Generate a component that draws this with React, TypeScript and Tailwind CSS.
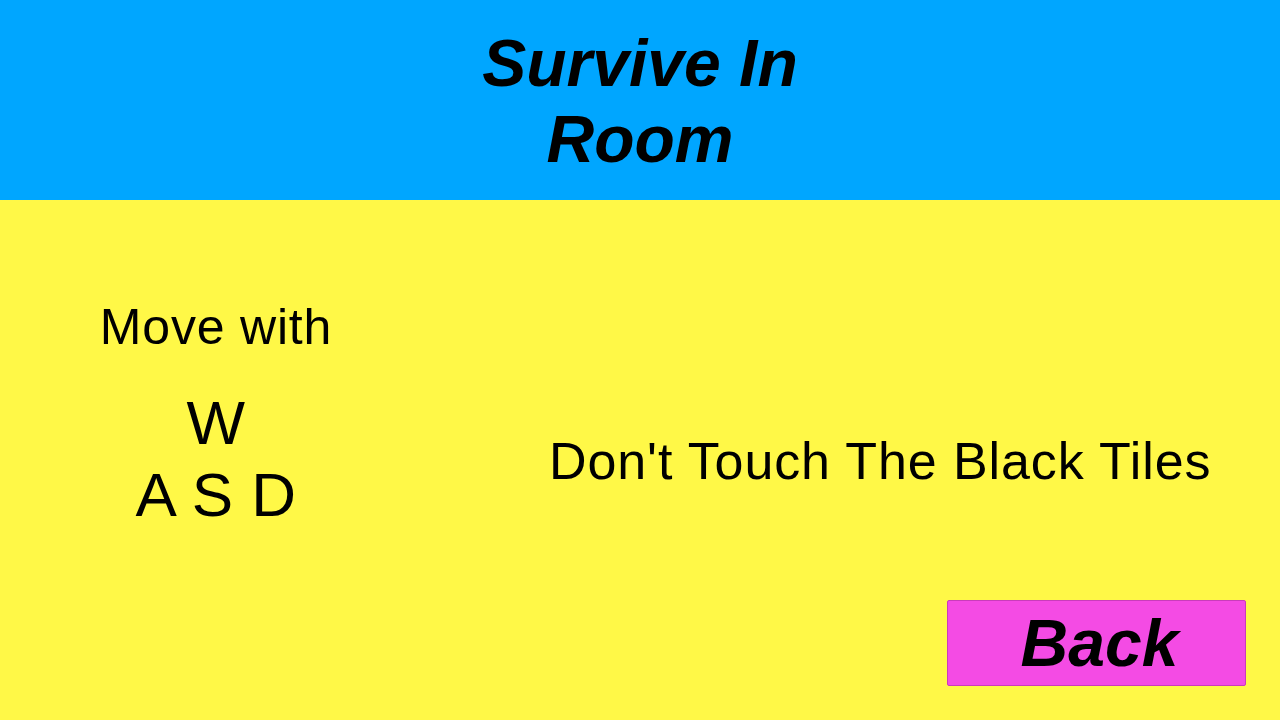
import React from 'react';

const font = { fontFamily: '"Liberation Sans", Arial, sans-serif' };

export default function App() {
  return (
    <div className="flex h-[720px] w-[1280px] flex-col overflow-hidden text-black" style={font}>
      <header className="flex h-[200px] shrink-0 items-center justify-center bg-[#00a6ff] pt-[2px]">
        <h1 className="w-[400px] text-center text-[66px] font-bold italic leading-[76px]">Survive In Room</h1>
      </header>

      <main className="flex flex-1 bg-[#fff847]">
        <section className="flex w-[432px] flex-col items-center pt-[99px]">
          <p className="text-[50px] leading-[57px] tracking-[0.8px]">Move with</p>
          <div className="mt-[31px] flex flex-col items-center text-[62px] leading-[72px] tracking-[0.5px]">
            <span>W</span>
            <span>A S D</span>
          </div>
        </section>

        <section className="flex flex-1 flex-col pt-[231px]">
          <p className="pl-[117px] text-[52px] leading-[60px] tracking-[0.9px]">Don't Touch The Black Tiles</p>
          <button className="mr-[34px] mt-[109px] flex h-[86px] w-[299px] items-center justify-center self-end rounded-[2px] border border-[#c93cbb] bg-[#f44be4] pl-[6px] text-[66px] font-bold italic leading-none">
            Back
          </button>
        </section>
      </main>
    </div>
  );
}
